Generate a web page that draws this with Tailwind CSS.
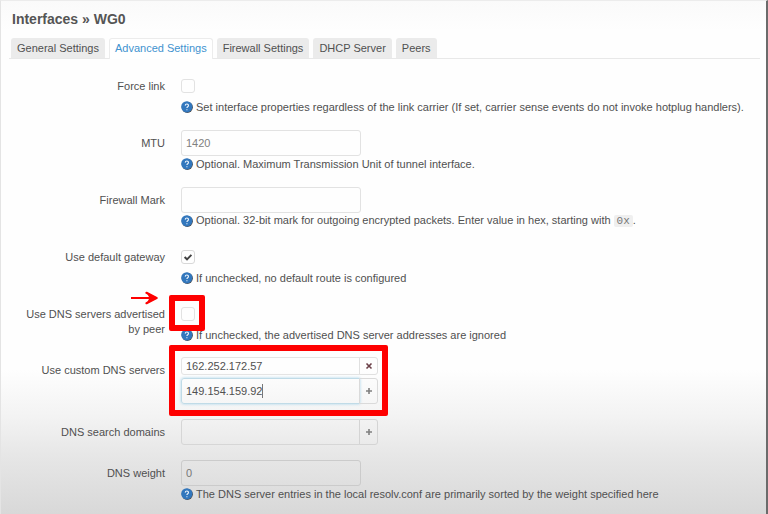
<!DOCTYPE html>
<html lang="en">

<head>
    <meta charset="UTF-8">
    <meta name="viewport" content="width=device-width, initial-scale=1.0">
    <title>Interfaces » WG0</title>
    <script src="https://cdn.jsdelivr.net/npm/@tailwindcss/browser@4"></script>
</head>

<body class="min-h-screen overflow-hidden border-t border-l border-r-2 border-t-[#ececec] border-l-[#e4e4e4] border-r-[#6b6b6b] bg-[linear-gradient(to_bottom,#fafafa,#fefefe_6%,#fefefe_72%,#f3f3f3_81%,#e6e6e6_89%,#d8d8d8)] font-['Liberation_Sans',Arial,sans-serif] text-[11px] leading-[15px] text-[#505050]">
    <!-- Icon definitions -->
    <svg class="hidden">
        <symbol id="help" viewBox="0 0 12 12">
            <circle cx="6.3" cy="6.3" r="5.6" fill="#4c4f55" />
            <circle cx="5.8" cy="5.8" r="5.6" fill="#3277bd" />
            <path d="M4.2 4.6C4.3 2.5 7.6 2.6 7.5 4.6C7.4 5.8 5.9 5.7 5.9 7.1M5.9 8.2V9.2" fill="none" stroke="#e8f1fb" stroke-width="1.1" />
        </symbol>
    </svg>

    <main class="pt-2.5 pr-1.5 pl-2">
        <h1 class="pl-[3px] text-[14px] leading-4 font-bold text-[#555555]">Interfaces » WG0</h1>

        <!-- Tabs -->
        <nav class="mt-[11px] flex gap-1 border-b border-[#e8e8e8] pl-0.5">
            <a href="#" class="h-5 rounded-t-[3px] bg-[#ebebeb] px-1.5 leading-5">General Settings</a>
            <a href="#" class="-mb-px h-[21px] rounded-t-[3px] border border-b-0 border-[#ececec] bg-white px-[5px] leading-[18px] text-[#3f93cf]">Advanced Settings</a>
            <a href="#" class="h-5 rounded-t-[3px] bg-[#ebebeb] px-1.5 leading-5">Firewall Settings</a>
            <a href="#" class="h-5 rounded-t-[3px] bg-[#ebebeb] px-1.5 leading-5">DHCP Server</a>
            <a href="#" class="h-5 rounded-t-[3px] bg-[#ebebeb] px-1.5 leading-5">Peers</a>
        </nav>

        <form class="mt-3.5 flex flex-col gap-[15px]">
            <div class="flex gap-4">
                <label for="force" class="w-[156px] shrink-0 pt-1.5 pl-3 text-right">Force link</label>
                <div class="flex-1">
                    <div class="flex h-[26px] items-center">
                        <input id="force" type="checkbox" class="size-3.5 appearance-none rounded-[3px] border border-[#e2e2e2]">
                    </div>
                    <p class="flex h-4 items-center gap-[3px] whitespace-nowrap">
                        <svg class="size-3 shrink-0"><use href="#help" /></svg>
                        <span>Set interface properties regardless of the link carrier (If set, carrier sense events do not invoke hotplug handlers).</span>
                    </p>
                </div>
            </div>

            <div class="flex gap-4">
                <label for="mtu" class="w-[156px] shrink-0 pt-1.5 pl-3 text-right">MTU</label>
                <div class="flex-1">
                    <input id="mtu" type="text" placeholder="1420" class="block h-[26px] w-[180px] rounded-[3px] border border-[#e2e2e2] px-1 placeholder:text-[#808080]">
                    <p class="flex h-4 items-center gap-[3px] whitespace-nowrap">
                        <svg class="size-3 shrink-0"><use href="#help" /></svg>
                        <span>Optional. Maximum Transmission Unit of tunnel interface.</span>
                    </p>
                </div>
            </div>

            <div class="flex gap-4">
                <label for="mark" class="w-[156px] shrink-0 pt-1.5 pl-3 text-right">Firewall Mark</label>
                <div class="flex-1">
                    <input id="mark" type="text" class="block h-[26px] w-[180px] rounded-[3px] border border-[#e2e2e2] px-1">
                    <p class="flex h-4 items-center gap-[3px] whitespace-nowrap">
                        <svg class="size-3 shrink-0"><use href="#help" /></svg>
                        <span>Optional. 32-bit mark for outgoing encrypted packets. Enter value in hex, starting with <code class="rounded-xs bg-[#efefef] px-[3px] font-['Liberation_Mono',monospace] text-[11px] text-[#777777]">0x</code>.</span>
                    </p>
                </div>
            </div>

            <div class="flex gap-4">
                <label for="gateway" class="w-[156px] shrink-0 pt-1.5 pl-3 text-right">Use default gateway</label>
                <div class="flex-1">
                    <div class="grid h-[26px] items-center">
                        <input id="gateway" type="checkbox" checked class="peer col-start-1 row-start-1 size-3.5 appearance-none rounded-[3px] border border-[#d8d8d8]">
                        <svg class="pointer-events-none invisible col-start-1 row-start-1 size-3.5 peer-checked:visible" viewBox="0 0 14 14"><path d="M3.6 7L6 9.3L10.4 4.8" fill="none" stroke="#404040" stroke-width="1.9" /></svg>
                    </div>
                    <p class="flex h-4 items-center gap-[3px] whitespace-nowrap">
                        <svg class="size-3 shrink-0"><use href="#help" /></svg>
                        <span>If unchecked, no default route is configured</span>
                    </p>
                </div>
            </div>

            <div class="flex h-[41px] gap-4">
                <label for="peerdns" class="w-[156px] shrink-0 pt-1.5 pl-3 text-right">Use DNS servers advertised by peer</label>
                <div class="relative flex-1">
                    <div class="flex h-[26px] items-center">
                        <input id="peerdns" type="checkbox" class="size-3.5 appearance-none rounded-[3px] border border-[#e2e2e2]">
                    </div>
                    <p class="flex h-4 items-center gap-[3px] whitespace-nowrap">
                        <svg class="size-3 shrink-0"><use href="#help" /></svg>
                        <span>If unchecked, the advertised DNS server addresses are ignored</span>
                    </p>
                    <!-- Highlight and arrow -->
                    <div class="pointer-events-none absolute -top-1.5 -left-3 size-9 rounded-[2px] border-6 border-[#fe0000]"></div>
                    <svg class="pointer-events-none absolute -top-2.5 -left-[50px] h-3.5 w-7" viewBox="0 0 28 14">
                        <path d="M0.6 7H20M15.5 1.8L25.5 7L15.5 12.2" fill="none" stroke="#fe0000" stroke-width="2.2" stroke-linejoin="round" stroke-linecap="round" />
                        <path d="M15.5 1.5L27 7L15.5 12.5L18.5 7Z" fill="#fe0000" />
                    </svg>
                </div>
            </div>

            <div class="flex gap-4">
                <label for="dns" class="w-[156px] shrink-0 pt-1.5 pl-3 text-right">Use custom DNS servers</label>
                <div class="relative flex flex-1 flex-col gap-[3px]">
                    <div class="flex h-[18px]">
                        <input type="text" aria-label="DNS server 1" value="162.252.172.57" class="w-[179px] rounded-l-[3px] border border-[#e4e4e4] px-1">
                        <button type="button" aria-label="Remove" class="-ml-px flex w-[19px] items-center justify-center rounded-r-[3px] border border-[#e0e0e0]">
                            <svg class="size-2" viewBox="0 0 8 8"><path d="M1.5 1.5L6.5 6.5M6.5 1.5L1.5 6.5" stroke="#6b4048" stroke-width="1.6" /></svg>
                        </button>
                    </div>
                    <div class="flex h-[26px]">
                        <div class="flex w-[179px] items-center rounded-l-[3px] border border-[#c0dbe7] shadow-[0_0_3px_#a8d4ea]">
                            <input id="dns" type="text" value="149.154.159.92" size="14" class="field-sizing-content h-full pl-1 outline-none">
                            <span class="h-3.5 w-px bg-[#777777]"></span>
                        </div>
                        <button type="button" aria-label="Add server" class="-ml-px flex w-[19px] items-center justify-center rounded-r-[3px] border border-[#dadada]">
                            <svg class="size-2" viewBox="0 0 8 8"><path d="M4 1V7M1 4H7" stroke="#808080" stroke-width="1.6" /></svg>
                        </button>
                    </div>
                    <!-- Highlight -->
                    <div class="pointer-events-none absolute -top-3 -left-3 h-[71px] w-[219px] rounded-[2px] border-6 border-[#fe0000]"></div>
                </div>
            </div>

            <div class="flex gap-4">
                <label for="domains" class="w-[156px] shrink-0 pt-1.5 pl-3 text-right">DNS search domains</label>
                <div class="flex h-[26px] flex-1">
                    <input id="domains" type="text" class="w-[179px] rounded-l-[3px] border border-[#d6d6d6] px-1">
                    <button type="button" aria-label="Add domain" class="-ml-px flex w-[19px] items-center justify-center rounded-r-[3px] border border-[#d4d4d4]">
                        <svg class="size-2" viewBox="0 0 8 8"><path d="M4 1V7M1 4H7" stroke="#808080" stroke-width="1.6" /></svg>
                    </button>
                </div>
            </div>

            <div class="flex gap-4">
                <label for="weight" class="w-[156px] shrink-0 pt-1.5 pl-3 text-right">DNS weight</label>
                <div class="flex-1">
                    <input id="weight" type="text" placeholder="0" class="block h-[26px] w-[180px] rounded-[3px] border border-[#cbcbcb] px-1 placeholder:text-[#777777]">
                    <p class="flex h-4 items-center gap-[3px] whitespace-nowrap">
                        <svg class="size-3 shrink-0"><use href="#help" /></svg>
                        <span>The DNS server entries in the local resolv.conf are primarily sorted by the weight specified here</span>
                    </p>
                </div>
            </div>
        </form>
    </main>
</body>

</html>
